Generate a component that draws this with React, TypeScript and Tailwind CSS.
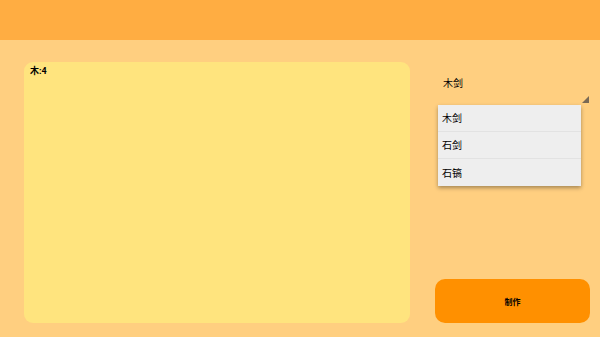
import React from "react";

export default function App() {
  const items = ["木剑", "石剑", "石镐"];
  return (
    <div
      className="w-[600px] h-[337px] bg-[#FFCF80] flex flex-col overflow-hidden"
      style={{ fontFamily: '"Roboto", "Noto Sans CJK SC", sans-serif' }}
    >
      <div className="h-[40px] bg-[#FFAD42] shrink-0" />
      <div className="flex flex-1 pt-[22px] pb-[14px] pl-[24px] pr-[10px]">
        <div className="w-[386px] h-[261px] bg-[#FFE47E] rounded-[9px] pl-[6px] pt-[3px]">
          <div className="text-[9px] font-bold text-black leading-[12px]">木:4</div>
        </div>
        <div className="flex-1 flex flex-col ml-[25px]">
          <div className="relative h-[43px] ml-[3px]">
            <div className="pl-[5px] pt-[15px] text-[10px] leading-[14px] text-black">木剑</div>
            <svg className="absolute right-[1px] top-[34px]" width="7" height="7" viewBox="0 0 7 7">
              <polygon points="7,0 7,7 0,7" fill="#7a6a55" />
            </svg>
            <div className="absolute left-0 top-[43px] w-[143px] bg-[#EEEEEE] shadow-[0_2px_4px_rgba(0,0,0,0.35)] z-10">
              {items.map((t, i) => (
                <div
                  key={t}
                  className={
                    "h-[27px] flex items-center pl-[4px] pt-[1px] text-[10px] text-black " +
                    (i < items.length - 1 ? "border-b border-[#E2E2E2]" : "")
                  }
                >
                  {t}
                </div>
              ))}
            </div>
          </div>
          <div className="flex-1" />
          <div className="h-[44px] bg-[#FF9000] rounded-[10px] flex items-center justify-center pt-[3px]">
            <span className="text-[8px] font-bold text-black">制作</span>
          </div>
        </div>
      </div>
    </div>
  );
}
